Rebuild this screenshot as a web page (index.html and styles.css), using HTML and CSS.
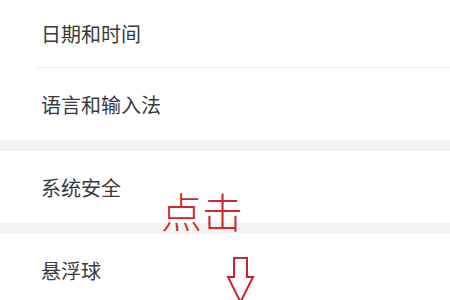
FILE: index.html
```html
<!DOCTYPE html>
<html lang="zh">
<head>
<meta charset="utf-8">
<link rel="stylesheet" href="styles.css">
</head>
<body>
<div class="page">
  <div class="group">
    <div class="row first">日期和时间</div>
    <div class="row">语言和输入法</div>
  </div>
  <div class="band"></div>
  <div class="group">
    <div class="row">系统安全</div>
  </div>
  <div class="band"></div>
  <div class="group">
    <div class="row">悬浮球</div>
  </div>
  <div class="note">点击</div>
  <svg class="arrow" width="30" height="50" viewBox="0 0 30 50">
    <path d="M6 2 H19 V21 H25 L12.5 46 L0 21 H6 Z" transform="translate(2 0)" fill="none" stroke="#c8262e" stroke-width="2" stroke-linejoin="miter"/>
  </svg>
</div>
</body>
</html>
```
FILE: styles.css
```css
html, body {
  margin: 0;
  padding: 0;
  background: #ffffff;
}
.page {
  position: relative;
  width: 450px;
  height: 300px;
  overflow: hidden;
  font-family: "Noto Sans CJK SC", "Noto Sans", sans-serif;
}
.group {
  display: flex;
  flex-direction: column;
}
.row {
  height: 72px;
  display: flex;
  align-items: center;
  padding-left: 41px;
  font-size: 20px;
  font-weight: 400;
  color: #3a3a3a;
}
.row.first {
  height: 69px;
  margin-top: -1px;
  position: relative;
}
.row.first::after {
  content: "";
  position: absolute;
  left: 37px;
  right: 0;
  bottom: 0;
  height: 1px;
  background: #ededed;
}
.band {
  height: 11px;
  background: #f3f3f3;
}
.note {
  position: absolute;
  left: 161px;
  top: 190px;
  font-size: 41px;
  line-height: 1;
  font-weight: 300;
  color: #cc2a33;
  font-family: "Noto Sans CJK SC", serif;
}
.arrow {
  position: absolute;
  left: 226px;
  top: 256px;
}
```
